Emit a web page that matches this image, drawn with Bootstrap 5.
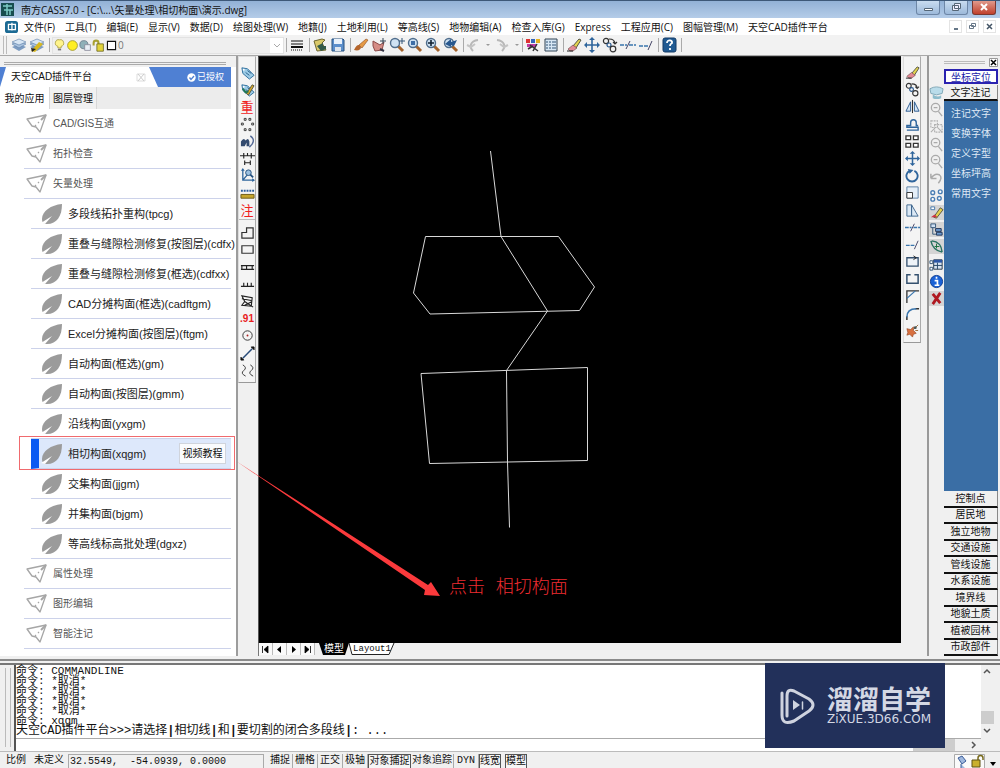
<!DOCTYPE html>
<html lang="zh-CN">
<head>
<meta charset="utf-8">
<meta name="viewport" content="width=device-width, initial-scale=1">
<title>南方CASS7.0</title>
<link rel="stylesheet" href="https://cdn.jsdelivr.net/npm/bootstrap@5.3.0/dist/css/bootstrap.min.css">
<style>
:root{--face:#f0f0f0;--edge:#8c8c8c;--cass:#3a6ea5}
body{font:10px/14px "Open Sans","Noto Sans CJK SC",sans-serif;color:#111;background:var(--face)}
button{font:inherit;color:inherit;background:none;border:0;padding:0}
a{color:inherit;text-decoration:none}
svg{display:block}
.ic{width:16px;height:16px;flex:none}
.titlebar{height:18px;border-top:1px solid #3d5878;background:linear-gradient(#92b1d6,#b4cce8);padding-left:1px}
.wbtn{width:24px;height:14px;border:1px solid #6d86a6;border-top:0;border-radius:0 0 3px 3px;background:linear-gradient(#c9dcf0,#9cb9da)}
.wbtn.shut{background:linear-gradient(#e09a8c,#c0402c);border-color:#7a3830}
.menubar{height:17px;background:#fff;padding-left:5px}
.menubar .menus{gap:10px;padding-left:6px}
.mdi{width:13px;height:13px;border:1px solid #e4e4e4}
.toolbar{height:21px;border-bottom:1px solid #a8a8a8;background:#f2f2f2;padding-left:3px}
.toolbar.d-flex>.tb{width:18px;height:18px}
.grip{width:4px;height:18px;border-left:1px solid #bbb;border-right:1px solid #bbb}
.vsep{width:1px;height:14px;background:#aaa;margin:0 2px}
.layerbox{width:232px;height:17px;border:1px solid #e2e2e2;background:#efefef;color:#777}
.sidebar{width:238px;border-right:2px solid #9c9c9c;background:#fff}
.dockgrip{height:11px;background:var(--face);padding-top:6px}
.dockgrip span{display:block;height:3px;margin:0 10px 0 4px;border-top:1px solid #aaa;border-bottom:1px solid #aaa}
.plugtab{height:20px;background:#4f80d3;margin-right:5px}
.plugtab .page{width:158px;background:#fff;clip-path:polygon(6px 0,149px 0,100% 100%,0 100%);padding:0 11px;font-size:10px;font-family:"Liberation Sans","Noto Sans CJK SC",sans-serif}
.auth{font-size:9px;color:#fff;padding-right:7px}
.subtabs{height:22px;background:#ececec;margin-right:5px}
.subtabs button{width:50px;border-right:1px solid #d8d8d8}
.subtabs .on{background:#fff}
.subtabs button+button{width:47px;background:#f1f1f1}
.tree{margin:0 5px 0 24px;font-family:"Liberation Sans","Noto Sans CJK SC",sans-serif}
.tree a{display:flex;align-items:center;height:30px;border-bottom:1px solid #ccd2ea;white-space:nowrap}
.tree svg{flex:none}
.grp{color:#555;padding-left:2px;gap:5px}
.leaf{margin-left:7px;padding-left:10px;gap:5px;font-size:11px;color:#222}
.leafrow{position:relative}
.leafrow.on .leaf{background:#dde8fb;border-left:8px solid #0a5af2;padding-left:2px}
.leafrow.on::after{content:"";position:absolute;inset:-3px -4px -1px -5px;border:1px solid #f06a6e;z-index:3;pointer-events:none}
.leafrow .vid{position:absolute;right:5px;top:4px;width:47px;height:21px;border:1px solid #d0d4dc;background:#fafbfd;font-size:10px}
.toolcol{width:18px;background:#f4f4f4;border:1px solid #ddd;border-bottom-color:#999;border-right-color:#aaa;padding:7px 0 3px}
.toolcol .set,.sidecol .set{display:flex;flex-direction:column;width:100%}
.set>button{flex:1 1 0;min-height:0;display:flex;align-items:center;justify-content:center}
.set>button .ic{width:15px;height:15px}
.h9{height:155px}.h16{height:275px}.h13{height:223px}
.redt{color:#f0201c;font-size:13px}
.redn{color:#e8201c;font:bold 10px "Liberation Sans",sans-serif}
.topgrip{height:3px;border-top:1px solid #bbb;border-bottom:1px solid #bbb}
.leftdock{width:20px}
.canvas{background:#000;border-left:1px solid #555;border-top:1px solid #222}
.canvas svg.draw{position:absolute;inset:0;width:100%;height:100%;overflow:visible;z-index:4;pointer-events:none}
.draw text{font:18px "Liberation Mono","Noto Sans CJK SC",monospace;font-weight:300;fill:#ee2c30}
.sheets{height:13px;border-left:1px solid #777;background:#f0f0f0;font-family:"Liberation Mono","Noto Sans CJK SC",monospace}
.sheets .nav-b{width:14px;height:12px;border-right:1px solid #bbb;background:#fafafa;display:flex;align-items:center;justify-content:center}
.sheets .m{width:30px;height:12px;line-height:11px;background:#000;color:#fff;clip-path:polygon(0 0,100% 0,26px 100%,4px 100%)}
.sheets .l{width:46px;height:12px;font-size:9px;line-height:11px;position:relative}
.sheets .l svg{position:absolute;inset:0}
.sheets .l span{position:relative}
.rightdock{width:26px;padding-left:2px}
.cass{width:73px;border-left:2px solid #999;padding-right:2px}
.sidecol{width:15px;padding-top:28px}
.panelc{width:54px}
.cbtn{background:#f0f0f0;border-bottom:2px solid #111;border-right:1px solid #888;text-align:center;line-height:13px}
.cbtn.first{border:2px solid #2a22b0;color:#1a1aa8;height:15px;line-height:10px;margin-bottom:1px;background:#fff}
.cbtn.second{height:16px}
.bluearea{background:var(--cass);color:#dfe9f5;padding-top:2px}
.bluearea a{display:block;text-align:center;line-height:20px}
.cassfoot{height:165px}
.cassfoot .cbtn{flex:1 1 0;min-height:0}
.splitter{height:9px;border-bottom:2px solid #777;background:#f0f0f0}
.splitter i{display:block;height:5px;border-bottom:2px solid #8b8b8b}
.cmd{height:86px;padding-left:5px}
.cmd .cgrip{width:6px;margin:3px 3px 4px 0;border-left:1px solid #bbb;border-right:1px solid #bbb}
.cmdtext{border-left:2px solid #555;background:#fff;font:11px/10px "Liberation Mono","Noto Sans CJK SC",monospace;min-width:0}
.cmdtext p{margin:0;height:10px;white-space:pre}
.cmdtext .log{height:73px;padding-top:1px}
.cmdtext .last{font-size:12px}
.cmdtext input{border:0;height:12px;font:inherit;outline:0;padding:0}
.cmdline{height:13px;border-top:1px solid #aaa}
.vbar{width:13px;background:#f0f0f0;height:73px;margin-right:6px}
.thumb{background:#cdcdcd}
.brand{position:absolute;right:55px;top:-2px;width:180px;height:85px;background:#22305a;color:#d4d8e4;z-index:5}
.brand b{font-size:26px;line-height:28px;font-weight:700;font-family:"Noto Sans CJK SC",sans-serif}
.brand small{font:12px/15px "DejaVu Sans","Noto Sans",sans-serif}
.status{height:17px;border-top:1px solid #bbb;padding:2px 0 0 6px;font-family:"Liberation Mono","Noto Sans CJK SC",monospace;white-space:nowrap}
.coords{width:196px;height:14px;border:1px solid #aaa;border-bottom:0;padding-left:1px}
.status button{height:14px;width:25px;border-right:1px solid #aaa;overflow:visible}
.status button.wide{width:43px}
.status button.mid{width:22px}
.status button.on{border:1px solid #555;border-bottom:0;background:#f6f6f6}
</style>
</head>
<body class="vh-100 d-flex flex-column overflow-hidden">
<svg width="0" height="0" class="position-absolute" aria-hidden="true">
<defs>
<g id="lay"><path d="M1 10l7-3 7 3-7 4z" fill="#7d9cc2"/><path d="M1 7l7-3 7 3-7 4z" fill="#a9c2de" stroke="#587aa5" stroke-width=".6"/><path d="M1 5l7-3 7 3-7 3z" fill="#d8e6f4" stroke="#587aa5" stroke-width=".6"/></g>
<g id="lay2"><use href="#lay"/><path d="M2 14l8-9 4 2-8 8z" fill="#d8b820"/><path d="M2 11l5 1-4 3z" fill="#222"/></g>
<g id="bulb"><path d="M8 1a4 4 0 0 1 2 8v2H6V9a4 4 0 0 1 2-8z" fill="#fff48c" stroke="#a79b3a"/><path d="M6 12h4v2H6z" fill="#777"/></g>
<g id="sun"><circle cx="8" cy="8" r="6" fill="#ffee22" stroke="#9c9120"/></g>
<g id="vp"><circle cx="6" cy="7" r="5" fill="#8fb0b8" stroke="#678"/><path d="M7 7h7v7H7z" fill="#e9eef5" stroke="#889"/></g>
<g id="lock"><path d="M2 8V5a3 3 0 0 1 6 0v2" fill="none" stroke="#a8a030" stroke-width="2.500"/><path d="M6 6h8v9H6z" fill="#e3d43a" stroke="#6a6520"/></g>
<g id="box"><path d="M3 3h10v10H3z" fill="#fff" stroke="#111" stroke-width="1.400"/></g>
<g id="lines"><path d="M2 4h12M2 7h12" stroke="#111"/><path d="M2 10h12" stroke="#111" stroke-width="2"/><path d="M2 13h12" stroke="#111" stroke-dasharray="1 1"/></g>
<g id="match"><path d="M2 4l8-2 3 1-3 3 4 7-9 1z" fill="#d9c96a" stroke="#6d6630"/><path d="M5 9l6-3v3h3v3l-5 2z" fill="#335a4a"/></g>
<g id="save"><path d="M2 2h11l1 1v11H2z" fill="#5d8fcb" stroke="#27507f"/><path d="M4 2h8v5H4z" fill="#eaf2fb"/><path d="M5 10h6v4H5z" fill="#dfe6ee"/></g>
<g id="brush"><path d="M1 13c2-4 3-5 5-5l2 2c0 3-3 4-7 3z" fill="#b5652b"/><path d="M6 8l7-6 2 1-6 8z" fill="#e59a45" stroke="#8d4a1c" stroke-width=".6"/></g>
<g id="pan"><path d="M2 4l7 4 4-3-2 8-7 1-2-5z" fill="#d58d86" stroke="#8c4a48"/><path d="M12 1v6M9 4h6" stroke="#345"/><path d="M9 12l4 2" stroke="#334" stroke-width="2"/></g>
<g id="zoomg"><path d="M9 9l5 5" stroke="#a4632c" stroke-width="3"/><circle cx="6" cy="6" r="4.500" fill="#cfe2f3" stroke="#4f6d8c" stroke-width="1.400"/></g>
<g id="zrt"><use href="#zoomg"/><path d="M13 1v6M10 4h6" stroke="#357"/></g>
<g id="zwin"><use href="#zoomg"/><path d="M4 4h4v4H4z" fill="#3e6ea6"/></g>
<g id="zplus"><use href="#zoomg"/><path d="M6 3v6M3 6h6" stroke="#123" stroke-width="1.600"/></g>
<g id="zprev"><use href="#zoomg"/><path d="M2 7l6-5v3l6-2-3 6-3-1v2z" fill="#28588f"/></g>
<g id="undo" fill="none" stroke="#b8b8b8" stroke-width="2"><path d="M7 14C3 10 4 4 12 3"/><path d="M1 8l4 2 4-3" stroke="#c4c4c4"/></g>
<g id="redo"><use href="#undo" transform="translate(16)scale(-1 1)"/></g>
<g id="pal"><path d="M1 2h4v4H1z" fill="#d33"/><path d="M6 2h4v4H6z" fill="#36b"/><path d="M11 2h4v4h-4z" fill="#e4b21f"/><path d="M2 7h9v3H2z" fill="#c33ca5"/><path d="M5 8l8 6M12 7l-4 7M3 12l5-3" stroke="#333" stroke-width="1.500"/></g>
<g id="calc"><path d="M2 2h12v12H2z" fill="#d7e7f5" stroke="#345"/><path d="M4 4v8M7 4v8M10 4v8M12 4v8" stroke="#357" stroke-dasharray="2 1"/></g>
<g id="erase"><path d="M7 9l6-7 2 1-5 8z" fill="#e4d44e" stroke="#554"/><path d="M2 12l5-4 4 3-4 3H4z" fill="#e28a94" stroke="#644" stroke-width=".6"/><path d="M1 14h6" stroke="#222"/></g>
<g id="move"><path d="M8 2v12M2 8h12" stroke="#2f659c" stroke-width="1.600"/><path d="M8 0l3 3H5zM8 16l3-3H5zM0 8l3-3v6zM16 8l-3-3v6z" fill="#2f659c"/></g>
<g id="copy" fill="none" stroke="#333" stroke-width="1.200"><circle cx="4" cy="4" r="2.600"/><circle cx="7" cy="8" r="2" stroke="#27588f"/><circle cx="11" cy="12" r="2.800"/><path d="M7 2q6 0 6 5M11 5l2 2 2-2"/></g>
<g id="trim" fill="none"><path d="M0 8h7M9 8h7" stroke="#3a75ad" stroke-width="1.400" stroke-dasharray="4 1"/><path d="M6 12l4-8" stroke="#446"/></g>
<g id="ext" fill="none"><path d="M1 9h10" stroke="#3a75ad" stroke-width="1.400" stroke-dasharray="4 1"/><path d="M10 13l4-9" stroke="#446"/></g>
<g id="help"><rect x="2" y="1" width="13" height="14" rx="2" fill="#205a92" stroke="#123a66"/><path d="M6 6c0-4 6-3 5 0-1 1-2 1-2 3M9 11v2" fill="none" stroke="#fff" stroke-width="1.800"/></g>
<g id="tag"><path d="M2 3l6 1 7 7-5 4-7-6z" fill="#9ccbe6" stroke="#2f6e9c"/><path d="M6 8l4 3M8 6l4 3" stroke="#265f8a"/><circle cx="4" cy="5" r="1" fill="#fff"/></g>
<g id="tag2"><use href="#tag"/><path d="M7 12l6-9 2 1-6 10z" fill="#d7a92a" stroke="#554"/><path d="M3 7l3 4 3-1" fill="none" stroke="#275" stroke-width="2"/></g>
<g id="ring" fill="#fff" stroke="#333"><path d="M4.500 1.500h2v2h-2zM9.500 1.500h2v2h-2zM1.500 6.500h2v2h-2zM12.500 6.500h2v2h-2zM4.500 12.500h2v2h-2zM9.500 12.500h2v2h-2z"/></g>
<g id="bino"><path d="M1 8q3-5 5-1 3-4 4 1v5H7V9L5 13H1z" fill="#334a6e"/><path d="M11 2q7 5-1 12" fill="none" stroke="#556a96" stroke-width="1.500"/></g>
<g id="dim" fill="none" stroke="#222" stroke-width="1.200"><path d="M0 5h16M4 2v6M8 2v3M12 2v6M5 10v5M11 10v5M5 12.500h6"/></g>
<g id="axis"><path d="M3 2v11h12M3 13L8 7" fill="none" stroke="#2f659c" stroke-width="1.400"/><path d="M3 0l2 3H1zM16 13l-3-2v4z" fill="#2f659c"/><circle cx="9" cy="5" r="3" fill="#9bc0e0" stroke="#234f7d"/><path d="M11 7l3 3" stroke="#234f7d" stroke-width="2"/></g>
<g id="rul"><path d="M1 5h14" stroke="#2a5c9c" stroke-width="2" stroke-dasharray="2 1"/><path d="M1 9h14v4H1z" fill="#c5a52c" stroke="#6e5c18"/></g>
<g id="poly"><path d="M2 14V8h5V3h7v11z" fill="none" stroke="#333" stroke-width="1.300"/></g>
<g id="rect"><path d="M2 4h12v8H2z" fill="none" stroke="#333" stroke-width="1.300"/></g>
<g id="rail"><path d="M1 6h14M1 10h14M2 6v4M7 6v4M13 6v4" stroke="#222" stroke-width="1.200"/></g>
<g id="comb"><path d="M1 10h14M4 6v4M8 6v4M12 6v4" stroke="#222" stroke-width="1.200"/></g>
<g id="mesh" fill="none" stroke="#222" stroke-width="1.200"><path d="M2 2l11 2-1 9-10-1 3-4zM2 5l10 2M5 8l9 6M5 12l8-4"/></g>
<g id="circ" fill="none" stroke="#333"><circle cx="8" cy="8" r="5"/><circle cx="8" cy="8" r="1" fill="#a22" stroke="none"/></g>
<g id="lin"><path d="M3 13L13 3" stroke="#284a78" stroke-width="1.600"/><path d="M1 12l3 3H1zM15 1v3l-3-3z" fill="#111" stroke="#111"/></g>
<g id="wave" fill="none" stroke="#333"><path d="M3 2q5 3 1 6t2 6M11 2q5 3 1 6t2 6"/></g>
<g id="mirror" fill="#d7e6f4" stroke="#27588f"><path d="M6 3v10H1zM10 3v10h5z"/><path d="M8 1v14" stroke="#222"/></g>
<g id="offs" fill="none" stroke="#2f659c" stroke-width="1.500"><path d="M2 14h12v-3H2v-2h4V6a3 3 0 0 1 6 0v3h2"/></g>
<g id="arr" fill="#fff" stroke="#333" stroke-width="1.400"><path d="M1 2h5v4H1zM9 2h5v4H9zM1 10h5v4H1zM9 10h5v4H9z"/></g>
<g id="rot"><path d="M10 3a6 6 0 1 1-5 0" fill="none" stroke="#2f659c" stroke-width="2"/><path d="M3 1l6 1-4 4z" fill="#2f659c"/></g>
<g id="scale" fill="#e4eef8" stroke="#5a7fa5"><path d="M2 2h12v12H2z"/><path d="M2 8h6v6H2z" fill="#fff" stroke="#333"/></g>
<g id="stretch" fill="#dce9f5" stroke="#40678f"><path d="M2 2h5v12H2zM7 2l7 12H7z"/></g>
<g id="brk"><path d="M2 4h12v9H2z" fill="#eef3f8" stroke="#34506e" stroke-width="1.400"/><path d="M9 2l3 2-3 2" fill="none" stroke="#222"/></g>
<g id="brk2"><path d="M6 4H2v9h12V4h-4" fill="none" stroke="#34506e" stroke-width="1.600"/></g>
<g id="cham" fill="none" stroke-width="1.400"><path d="M2 15V2h13" stroke="#333"/><path d="M2 10l9-8" stroke="#3a75ad"/></g>
<g id="fil" fill="none" stroke-width="1.600"><path d="M2 15V11M11 3h4" stroke="#333"/><path d="M2 12q0-9 10-9" stroke="#3a75ad"/></g>
<g id="expl"><path d="M2 6l4 1 3-3v4l3 3-3 1-1 3-3-3-3 1 1-3z" fill="#d8703f" stroke="#8a3c1e" stroke-width=".6"/><path d="M9 7l5-5M11 8h3" stroke="#9a6b3a"/><circle cx="11" cy="5" r="1.500" fill="#455"/></g>
<g id="disk"><path d="M1 4q7-4 14 0l-1 5q-6 3-12 0z" fill="#b9dcea" stroke="#7fa6b5"/><path d="M4 10q5 4 9 1v3q-5 2-9 0z" fill="#8dbccc"/></g>
<g id="zgray" fill="none" stroke="#aaa" stroke-width="1.400"><circle cx="7" cy="6" r="4.500"/><path d="M10 10l4 5M5 6h4"/></g>
<g id="zgray2" fill="none" stroke="#b0b0b0" stroke-width="1.200"><path d="M2 2h7v7H2zM6 6h8v8H6z" stroke-dasharray="2 1"/><path d="M9 9l5 5M2 14l4-4"/></g>
<g id="undog" fill="none" stroke="#aaa" stroke-width="1.600"><path d="M2 8h6M2 8V3M2 8q4-6 9-4 4 3-1 9"/></g>
<g id="nodes" fill="#fff" stroke="#4a7eb4" stroke-width="1.500"><circle cx="4" cy="5" r="2"/><circle cx="12" cy="4" r="2"/><circle cx="4" cy="12" r="2"/><circle cx="11" cy="11" r="2"/></g>
<g id="shade"><path d="M0 0h16v16H0z" fill="#d4d4d4"/></g>
<g id="ed"><use href="#shade"/><path d="M2 2h4v3H2z" fill="#fff" stroke="#47a"/><path d="M5 13L12 3l3 2-7 9z" fill="#e4cf4d" stroke="#554"/><path d="M2 13l4-3 3 3z" fill="#c34"/></g>
<g id="hier"><use href="#shade"/><path d="M2 2h5v4H2z" fill="#cfe0f3" stroke="#357"/><path d="M7 7h6v3H7zM8 11h6v3H8z" fill="#6a9bd0" stroke="#235"/><path d="M4 6v7h4" fill="none" stroke="#357"/></g>
<g id="leafg"><use href="#shade"/><path d="M2 2q2 10 12 12M3 2q10 1 11 12" fill="none" stroke="#287060" stroke-width="1.500"/><path d="M8 5v5M6 8h5" stroke="#15723a"/></g>
<g id="tbl"><path d="M5 3h9v10H5z" fill="#d7e4f2" stroke="#234"/><path d="M5 3h9v3H5z" fill="#2a55a5"/><path d="M5 9h9M9 6v7" stroke="#246"/><path d="M1 4h3v3H1zM1 11h3v3H1z" fill="#fff" stroke="#357"/></g>
<g id="info"><circle cx="8" cy="8" r="6.500" fill="#1b62d6" stroke="#0c3c92"/><path d="M6 7h3v5M6 12h5M8 3v2" stroke="#fff" stroke-width="1.800" fill="none"/></g>
<g id="kill"><use href="#shade"/><path d="M4 3l8 10M12 2L4 14" stroke="#b01820" stroke-width="3"/></g>
<g id="plane" fill="none" stroke="#a6a6a6" stroke-width="1.300" stroke-linejoin="round"><path d="M1 5L20 1 14 18 10 13 6 12z"/><path d="M20 1L15 6" stroke-width="2"/><path d="M13 8l-1 1M10 11l-1 1"/></g>
<g id="lf"><path d="M21 1C10 2 1 8 1 16c0 4 2 5 5 5C16 21 21 13 21 1z" fill="#9b9b9b"/><path d="M0 20L11 13 4 21z" fill="#fff"/></g>
</defs></svg>

<header>
<div class="titlebar d-flex align-items-center">
<svg class="ic me-1" viewBox="0 0 16 16"><path d="M0 1h13v13H0z" fill="#174d50"/><path d="M2 4h9M3 8h9M6 2v11M9 8v5" stroke="#7cc9c5" stroke-width="1.500"/></svg>
<span class="flex-grow-1">南方CASS7.0 - [C:\...\矢量处理\相切构面\演示.dwg]</span>
<div class="d-flex align-self-start gap-1 pe-1">
<button class="wbtn" aria-label="最小化"><svg width="22" height="13"><path d="M7.500 7.500h8v2h-8z" fill="#fff" stroke="#567"/></svg></button>
<button class="wbtn" aria-label="还原"><svg width="22" height="13"><path d="M9.500 2.500h6v5h-6zM7.500 4.500h6v5h-6z" fill="#eef" stroke="#567"/></svg></button>
<button class="wbtn shut" aria-label="关闭"><svg width="22" height="13"><path d="M8 3l6 6M14 3L8 9" stroke="#fff" stroke-width="2"/></svg></button>
</div></div>
<nav class="menubar d-flex align-items-center">
<svg width="13" height="16" viewBox="0 0 15 16"><rect y="1" width="15" height="14" rx="3" fill="#1b6a94"/><path d="M4 5h8v6H4zM8 3v9" fill="none" stroke="#fff" stroke-width="1.500"/></svg>
<div class="menus d-flex flex-grow-1 text-nowrap"><a href="#">文件(F)</a><a href="#">工具(T)</a><a href="#">编辑(E)</a><a href="#">显示(V)</a><a href="#">数据(D)</a><a href="#">绘图处理(W)</a><a href="#">地籍(J)</a><a href="#">土地利用(L)</a><a href="#">等高线(S)</a><a href="#">地物编辑(A)</a><a href="#">检查入库(G)</a><a href="#">Express</a><a href="#">工程应用(C)</a><a href="#">图幅管理(M)</a><a href="#">天空CAD插件平台</a></div>
<button class="mdi" aria-label="最小化文档"><svg width="11" height="11"><path d="M4 8h4" stroke="#678" stroke-width="2"/></svg></button>
<button class="mdi mx-1" aria-label="还原文档"><svg width="11" height="11"><path d="M4.500 2.500h4v3h-4zM2.500 4.500h4v3h-4z" fill="#fff" stroke="#678"/></svg></button>
<button class="mdi me-1" aria-label="关闭文档"><svg width="11" height="11"><path d="M3 3l5 5M8 3L3 8" stroke="#456" stroke-width="1.500"/></svg></button>
</nav>
<div class="toolbar d-flex align-items-center">
<span class="grip me-1"></span>
<button class="tb" aria-label="图层"><svg class="ic" viewBox="0 0 16 16"><use href="#lay"/></svg></button>
<button class="tb" aria-label="上一图层"><svg class="ic" viewBox="0 0 16 16"><use href="#lay2"/></svg></button>
<span class="vsep"></span>
<button class="layerbox d-flex align-items-center" aria-label="当前图层"><svg width="13" height="15" viewBox="0 0 16 16"><use href="#bulb"/></svg><svg width="13" height="15" viewBox="0 0 16 16"><use href="#sun"/></svg><svg width="13" height="15" viewBox="0 0 16 16"><use href="#vp"/></svg><svg width="13" height="15" viewBox="0 0 16 16"><use href="#lock"/></svg><svg width="13" height="15" viewBox="0 0 16 16"><use href="#box"/></svg><span class="flex-grow-1 text-start">0</span><svg width="13" height="15" class="bg-white"><path d="M4 6l3 3 3-3" fill="none" stroke="#aaa"/></svg></button>
<span class="vsep"></span>
<button class="tb" aria-label="线型"><svg class="ic" viewBox="0 0 16 16"><use href="#lines"/></svg></button>
<span class="vsep"></span>
<button class="tb" aria-label="特性"><svg class="ic" viewBox="0 0 16 16"><use href="#match"/></svg></button>
<button class="tb" aria-label="保存"><svg class="ic" viewBox="0 0 16 16"><use href="#save"/></svg></button>
<span class="vsep"></span>
<button class="tb" aria-label="特性匹配"><svg class="ic" viewBox="0 0 16 16"><use href="#brush"/></svg></button>
<button class="tb" aria-label="平移"><svg class="ic" viewBox="0 0 16 16"><use href="#pan"/></svg></button>
<button class="tb" aria-label="实时缩放"><svg class="ic" viewBox="0 0 16 16"><use href="#zrt"/></svg></button>
<button class="tb" aria-label="窗口缩放"><svg class="ic" viewBox="0 0 16 16"><use href="#zwin"/></svg></button>
<button class="tb" aria-label="全部缩放"><svg class="ic" viewBox="0 0 16 16"><use href="#zplus"/></svg></button>
<button class="tb" aria-label="上一视图"><svg class="ic" viewBox="0 0 16 16"><use href="#zprev"/></svg></button>
<span class="vsep"></span>
<button class="tb" aria-label="撤销"><svg class="ic" viewBox="0 0 16 16"><use href="#undo"/></svg></button><svg width="9" height="8"><path d="M2 3h4l-2 2z" fill="#999"/></svg>
<button class="tb" aria-label="重做"><svg class="ic" viewBox="0 0 16 16"><use href="#redo"/></svg></button><svg width="9" height="8"><path d="M4 3h4l-2 2z" fill="#999"/></svg>
<span class="vsep"></span>
<button class="tb" aria-label="颜色"><svg class="ic" viewBox="0 0 16 16"><use href="#pal"/></svg></button>
<button class="tb" aria-label="计算"><svg class="ic" viewBox="0 0 16 16"><use href="#calc"/></svg></button>
<span class="vsep"></span>
<button class="tb" aria-label="删除"><svg class="ic" viewBox="0 0 16 16"><use href="#erase"/></svg></button>
<button class="tb" aria-label="移动"><svg class="ic" viewBox="0 0 16 16"><use href="#move"/></svg></button>
<button class="tb" aria-label="复制"><svg class="ic" viewBox="0 0 16 16"><use href="#copy"/></svg></button>
<button class="tb" aria-label="修剪"><svg class="ic" viewBox="0 0 16 16"><use href="#trim"/></svg></button>
<button class="tb" aria-label="延伸"><svg class="ic" viewBox="0 0 16 16"><use href="#ext"/></svg></button>
<span class="vsep"></span>
<button class="tb" aria-label="帮助"><svg class="ic" viewBox="0 0 16 16"><use href="#help"/></svg></button>
<span class="vsep"></span>
</div>
</header>

<main class="d-flex flex-grow-1" style="min-height:0">
<aside class="sidebar flex-shrink-0">
<div class="dockgrip"><span></span></div>
<div class="plugtab d-flex justify-content-between align-items-stretch">
<div class="page d-flex align-items-center justify-content-between"><span>天空CAD插件平台</span><svg width="11" height="9"><path d="M1 1h8v7H1z" fill="none" stroke="#ddd"/><path d="M2 1l6 7M8 1L2 8" stroke="#ccc"/></svg></div>
<div class="auth d-flex align-items-center"><svg width="10" height="9" viewBox="0 0 10 9"><circle cx="4.500" cy="4.500" r="4.200" fill="#fff"/><path d="M2.500 4.500l1.500 2 3-3.500" fill="none" stroke="#4f80d3" stroke-width="1.300"/></svg>已授权</div>
</div>
<div class="subtabs d-flex"><button class="on">我的应用</button><button>图层管理</button></div>
<div class="tree">
<a href="#" class="grp"><svg width="22" height="20"><use href="#plane"/></svg>CAD/GIS互通</a>
<a href="#" class="grp"><svg width="22" height="20"><use href="#plane"/></svg>拓扑检查</a>
<a href="#" class="grp"><svg width="22" height="20"><use href="#plane"/></svg>矢量处理</a>
<a href="#" class="leaf"><svg width="22" height="22"><use href="#lf"/></svg>多段线拓扑重构(tpcg)</a>
<a href="#" class="leaf"><svg width="22" height="22"><use href="#lf"/></svg>重叠与缝隙检测修复(按图层)(cdfx)</a>
<a href="#" class="leaf"><svg width="22" height="22"><use href="#lf"/></svg>重叠与缝隙检测修复(框选)(cdfxx)</a>
<a href="#" class="leaf"><svg width="22" height="22"><use href="#lf"/></svg>CAD分摊构面(框选)(cadftgm)</a>
<a href="#" class="leaf"><svg width="22" height="22"><use href="#lf"/></svg>Excel分摊构面(按图层)(ftgm)</a>
<a href="#" class="leaf"><svg width="22" height="22"><use href="#lf"/></svg>自动构面(框选)(gm)</a>
<a href="#" class="leaf"><svg width="22" height="22"><use href="#lf"/></svg>自动构面(按图层)(gmm)</a>
<a href="#" class="leaf"><svg width="22" height="22"><use href="#lf"/></svg>沿线构面(yxgm)</a>
<div class="leafrow on"><a href="#" class="leaf"><svg width="22" height="22"><use href="#lf"/></svg>相切构面(xqgm)</a><button class="vid">视频教程</button></div>
<a href="#" class="leaf"><svg width="22" height="22"><use href="#lf"/></svg>交集构面(jjgm)</a>
<a href="#" class="leaf"><svg width="22" height="22"><use href="#lf"/></svg>并集构面(bjgm)</a>
<a href="#" class="leaf"><svg width="22" height="22"><use href="#lf"/></svg>等高线标高批处理(dgxz)</a>
<a href="#" class="grp"><svg width="22" height="20"><use href="#plane"/></svg>属性处理</a>
<a href="#" class="grp"><svg width="22" height="20"><use href="#plane"/></svg>图形编辑</a>
<a href="#" class="grp"><svg width="22" height="20"><use href="#plane"/></svg>智能注记</a>
</div>
</aside>

<div class="leftdock flex-shrink-0"><div class="toolcol">
<div class="set h9">
<button aria-label="查看编码"><svg class="ic" viewBox="0 0 16 16"><use href="#tag"/></svg></button>
<button aria-label="加入编码"><svg class="ic" viewBox="0 0 16 16"><use href="#tag2"/></svg></button>
<button class="redt">重</button>
<button aria-label="批量选目标"><svg class="ic" viewBox="0 0 16 16"><use href="#ring"/></svg></button>
<button aria-label="查找"><svg class="ic" viewBox="0 0 16 16"><use href="#bino"/></svg></button>
<button aria-label="线型换向"><svg class="ic" viewBox="0 0 16 16"><use href="#dim"/></svg></button>
<button aria-label="查询坐标"><svg class="ic" viewBox="0 0 16 16"><use href="#axis"/></svg></button>
<button aria-label="查询距离"><svg class="ic" viewBox="0 0 16 16"><use href="#rul"/></svg></button>
<button class="redt">注</button>
</div>
<hr class="m-0 mb-1">
<div class="set h9">
<button aria-label="多点房屋"><svg class="ic" viewBox="0 0 16 16"><use href="#poly"/></svg></button>
<button aria-label="四点房屋"><svg class="ic" viewBox="0 0 16 16"><use href="#rect"/></svg></button>
<button aria-label="依比例围墙"><svg class="ic" viewBox="0 0 16 16"><use href="#rail"/></svg></button>
<button aria-label="陡坎"><svg class="ic" viewBox="0 0 16 16"><use href="#comb"/></svg></button>
<button aria-label="斜坡"><svg class="ic" viewBox="0 0 16 16"><use href="#mesh"/></svg></button>
<button class="redn">.91</button>
<button aria-label="图根点"><svg class="ic" viewBox="0 0 16 16"><use href="#circ"/></svg></button>
<button aria-label="电力线"><svg class="ic" viewBox="0 0 16 16"><use href="#lin"/></svg></button>
<button aria-label="道路"><svg class="ic" viewBox="0 0 16 16"><use href="#wave"/></svg></button>
</div></div></div>

<section class="d-flex flex-column flex-grow-1" style="min-width:0">
<div class="canvas position-relative flex-grow-1">
<svg class="draw">
<g fill="none" stroke="#d8d8d8">
<path d="M231.500 94L242 179.500 288.500 254 247.500 313.500 248.500 405 250.500 470.500"/>
<path d="M166.500 179.500H299.500L335.500 230 320.500 253.500 171 257 154.500 236z"/>
<path d="M162 316.500L328.500 310.500V403.500L170.500 406.500z"/>
</g>
<path d="M-23 404L169 528 172 525 181 539 165 538 166 533z" fill="#fb3a3c"/>
<text x="190" y="536">点击 相切构面</text>
</svg>
</div>
<div class="sheets d-flex">
<button class="nav-b" aria-label="首页"><svg width="9" height="9"><path d="M1.500 1v7M7 1v7L3 4.500z" stroke="#000" stroke-width=".8"/></svg></button>
<button class="nav-b" aria-label="前页"><svg width="9" height="9"><path d="M6 1v7L2 4.500z"/></svg></button>
<button class="nav-b" aria-label="后页"><svg width="9" height="9"><path d="M3 1v7l4-3.500z"/></svg></button>
<button class="nav-b" aria-label="末页"><svg width="9" height="9"><path d="M7.500 1v7M2 1v7l4-3.500z" stroke="#000" stroke-width=".8"/></svg></button>
<button class="m ms-1">模型</button>
<button class="l"><svg width="46" height="12"><path d="M0 0l3 11.500h37L45 0" fill="#fff" stroke="#222"/></svg><span>Layout1</span></button>
</div>
</section>

<div class="rightdock flex-shrink-0"><div class="toolcol"><div class="set h16">
<button aria-label="删除"><svg class="ic" viewBox="0 0 16 16"><use href="#erase"/></svg></button>
<button aria-label="复制"><svg class="ic" viewBox="0 0 16 16"><use href="#copy"/></svg></button>
<button aria-label="镜像"><svg class="ic" viewBox="0 0 16 16"><use href="#mirror"/></svg></button>
<button aria-label="偏移"><svg class="ic" viewBox="0 0 16 16"><use href="#offs"/></svg></button>
<button aria-label="阵列"><svg class="ic" viewBox="0 0 16 16"><use href="#arr"/></svg></button>
<button aria-label="移动"><svg class="ic" viewBox="0 0 16 16"><use href="#move"/></svg></button>
<button aria-label="旋转"><svg class="ic" viewBox="0 0 16 16"><use href="#rot"/></svg></button>
<button aria-label="缩放"><svg class="ic" viewBox="0 0 16 16"><use href="#scale"/></svg></button>
<button aria-label="拉伸"><svg class="ic" viewBox="0 0 16 16"><use href="#stretch"/></svg></button>
<button aria-label="修剪"><svg class="ic" viewBox="0 0 16 16"><use href="#trim"/></svg></button>
<button aria-label="延伸"><svg class="ic" viewBox="0 0 16 16"><use href="#ext"/></svg></button>
<button aria-label="打断于点"><svg class="ic" viewBox="0 0 16 16"><use href="#brk"/></svg></button>
<button aria-label="打断"><svg class="ic" viewBox="0 0 16 16"><use href="#brk2"/></svg></button>
<button aria-label="倒角"><svg class="ic" viewBox="0 0 16 16"><use href="#cham"/></svg></button>
<button aria-label="圆角"><svg class="ic" viewBox="0 0 16 16"><use href="#fil"/></svg></button>
<button aria-label="分解"><svg class="ic" viewBox="0 0 16 16"><use href="#expl"/></svg></button>
</div></div></div>

<aside class="cass d-flex flex-shrink-0">
<div class="sidecol"><div class="set h13">
<button aria-label="重画"><svg class="ic" viewBox="0 0 16 16"><use href="#disk"/></svg></button>
<button aria-label="缩放"><svg class="ic" viewBox="0 0 16 16"><use href="#zgray"/></svg></button>
<button aria-label="窗选"><svg class="ic" viewBox="0 0 16 16"><use href="#zgray2"/></svg></button>
<button aria-label="放大"><svg class="ic" viewBox="0 0 16 16"><use href="#zgray"/></svg></button>
<button aria-label="缩小"><svg class="ic" viewBox="0 0 16 16"><use href="#zgray"/></svg></button>
<button aria-label="回退"><svg class="ic" viewBox="0 0 16 16"><use href="#undog"/></svg></button>
<button aria-label="节点"><svg class="ic" viewBox="0 0 16 16"><use href="#nodes"/></svg></button>
<button aria-label="编辑"><svg class="ic" viewBox="0 0 16 16"><use href="#ed"/></svg></button>
<button aria-label="结构"><svg class="ic" viewBox="0 0 16 16"><use href="#hier"/></svg></button>
<button aria-label="加点"><svg class="ic" viewBox="0 0 16 16"><use href="#leafg"/></svg></button>
<button aria-label="表格"><svg class="ic" viewBox="0 0 16 16"><use href="#tbl"/></svg></button>
<button aria-label="信息"><svg class="ic" viewBox="0 0 16 16"><use href="#info"/></svg></button>
<button aria-label="清除"><svg class="ic" viewBox="0 0 16 16"><use href="#kill"/></svg></button>
</div></div>
<div class="panelc d-flex flex-column">
<div class="d-flex align-items-center" style="height:13px"><span class="topgrip flex-grow-1 me-1"></span><button aria-label="关闭面板"><svg width="9" height="9"><path d="M.5.5h8v8h-8z" fill="#fff" stroke="#999"/><path d="M2 2l5 5M7 2L2 7" stroke="#000" stroke-width="1.500"/></svg></button></div>
<button class="cbtn first">坐标定位</button>
<button class="cbtn second">文字注记</button>
<div class="bluearea flex-grow-1"><a href="#">注记文字</a><a href="#">变换字体</a><a href="#">定义字型</a><a href="#">坐标坪高</a><a href="#">常用文字</a></div>
<div class="cassfoot d-flex flex-column"><button class="cbtn">控制点</button><button class="cbtn">居民地</button><button class="cbtn">独立地物</button><button class="cbtn">交通设施</button><button class="cbtn">管线设施</button><button class="cbtn">水系设施</button><button class="cbtn">境界线</button><button class="cbtn">地貌土质</button><button class="cbtn">植被园林</button><button class="cbtn">市政部件</button></div>
</div>
</aside>
</main>

<div class="splitter flex-shrink-0"><i></i></div>
<section class="cmd d-flex flex-shrink-0 position-relative">
<span class="cgrip"></span>
<div class="cmdtext flex-grow-1">
<div class="log"><p>命令: COMMANDLINE</p><p>命令: *取消*</p><p>命令: *取消*</p><p>命令: *取消*</p><p>命令: *取消*</p><p>命令: xqgm</p><p class="last">天空CAD插件平台&gt;&gt;&gt;请选择<b>|</b>相切线<b>|</b>和<b>|</b>要切割的闭合多段线<b>|</b>: ...</p></div>
<div class="cmdline d-flex"><input class="flex-grow-1" aria-label="命令行"><span class="thumb" style="width:42px"></span><svg width="26" height="12"><path d="M0 0h26v12H0z" fill="#f0f0f0"/><path d="M17 3l3 3-3 3" fill="none" stroke="#555" stroke-width="1.500"/></svg></div>
</div>
<div class="vbar d-flex flex-column align-items-center"><svg width="13" height="14"><path d="M3 8l3-3 3 3" fill="none" stroke="#555" stroke-width="1.500"/></svg><span class="thumb w-100 mt-auto" style="height:13px"></span><svg width="13" height="14"><path d="M3 5l3 3 3-3" fill="none" stroke="#555" stroke-width="1.500"/></svg></div>
<div class="brand d-flex align-items-center">
<svg width="62" height="85" fill="none" stroke="#cfd3df" stroke-width="3" stroke-linecap="round" stroke-linejoin="round"><path d="M22 53V33q0-8 7-5l15 8q8 6 0 12L29 58q-12 5-12-6V30"/><path d="M28 37l7 5-7 5z" fill="#cfd3df" stroke="none"/><path d="M37.500 39v7" stroke-width="1.500"/></svg>
<div class="d-flex flex-column"><b>溜溜自学</b><small>ZiXUE.3D66.COM</small></div></div>
</section>

<footer class="status d-flex flex-shrink-0">
<span>比例</span><span class="ms-2">未定义</span><span class="coords ms-1 me-1">32.5549,&nbsp; -54.0939, 0.0000</span>
<button>捕捉</button><button>栅格</button><button>正交</button><button>极轴</button><button class="wide on">对象捕捉</button><button class="wide">对象追踪</button><button>DYN</button><button class="mid on">线宽</button><button class="mid on ms-1">模型</button>
<svg class="ms-auto me-1" width="42" height="14"><path d="M.5 16V.5h30V16" fill="#fafafa" stroke="#aaa"/><path d="M4 4l4-2 4 5-4 3zM7 10v5h5" fill="#9fb8de" stroke="#3a5c98"/><path d="M24 7V4a2.500 2.500 0 0 1 5 0v2" fill="none" stroke="#776a1c" stroke-width="1.500"/><path d="M18 6h8v7h-8z" fill="#c9b02c" stroke="#5e5212"/><path d="M36 8h6l-3 4z" fill="#000"/></svg>
</footer>
<script src="https://cdn.jsdelivr.net/npm/bootstrap@5.3.0/dist/js/bootstrap.bundle.min.js"></script>
</body>
</html>
